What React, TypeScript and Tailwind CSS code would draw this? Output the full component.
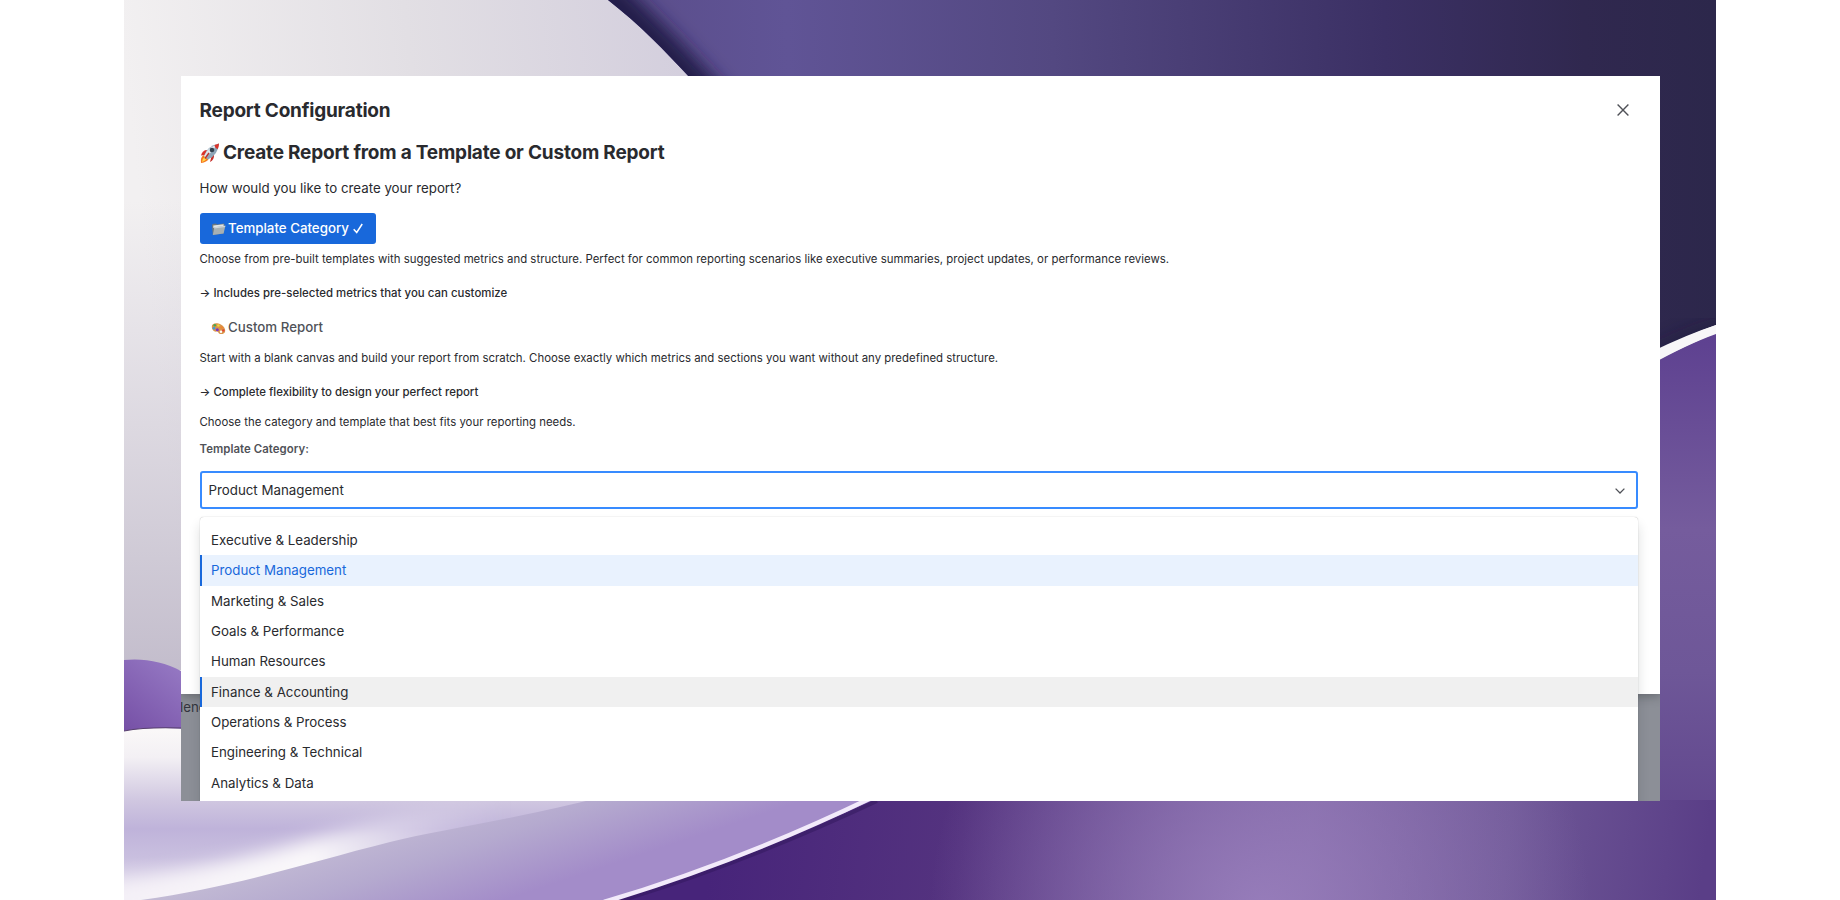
import React from "react";

const categories = [
  "Executive & Leadership",
  "Product Management",
  "Marketing & Sales",
  "Goals & Performance",
  "Human Resources",
  "Finance & Accounting",
  "Operations & Process",
  "Engineering & Technical",
  "Analytics & Data",
];

function Wallpaper() {
  return (
    <svg className="absolute inset-0 h-full w-full" viewBox="124 0 1592 900" preserveAspectRatio="none">
      <defs>
        <linearGradient id="pale" gradientUnits="userSpaceOnUse" x1="124" y1="60" x2="690" y2="0">
          <stop offset="0" stopColor="#f2f0f1" />
          <stop offset="0.5" stopColor="#e2dfe4" />
          <stop offset="1" stopColor="#d3cedd" />
        </linearGradient>
        <linearGradient id="paleDown" x1="0" y1="0" x2="0" y2="1">
          <stop offset="0.3" stopColor="#c8c2d2" stopOpacity="0" />
          <stop offset="1" stopColor="#c3bdcc" stopOpacity="1" />
        </linearGradient>
        <linearGradient id="night" gradientUnits="userSpaceOnUse" x1="610" y1="20" x2="1716" y2="0">
          <stop offset="0" stopColor="#5a4d8a" />
          <stop offset="0.16" stopColor="#605496" />
          <stop offset="0.4" stopColor="#534881" />
          <stop offset="0.7" stopColor="#3b3064" />
          <stop offset="0.88" stopColor="#30284f" />
          <stop offset="1" stopColor="#2c274b" />
        </linearGradient>
        <linearGradient id="violet" gradientUnits="userSpaceOnUse" x1="0" y1="330" x2="0" y2="900">
          <stop offset="0" stopColor="#5d4090" />
          <stop offset="0.35" stopColor="#755c9d" />
          <stop offset="0.6" stopColor="#6e5798" />
          <stop offset="1" stopColor="#5a3e87" />
        </linearGradient>
        <linearGradient id="deep" gradientUnits="userSpaceOnUse" x1="720" y1="780" x2="1700" y2="900">
          <stop offset="0" stopColor="#47247a" />
          <stop offset="0.25" stopColor="#54337f" />
          <stop offset="0.6" stopColor="#7b62a1" />
          <stop offset="0.8" stopColor="#6f5897" />
          <stop offset="1" stopColor="#5a3e87" />
        </linearGradient>
        <radialGradient id="glow" gradientUnits="userSpaceOnUse" cx="1260" cy="910" r="330">
          <stop offset="0" stopColor="#9a80bd" stopOpacity="0.9" />
          <stop offset="1" stopColor="#9a80bd" stopOpacity="0" />
        </radialGradient>
        <linearGradient id="bulb" gradientUnits="userSpaceOnUse" x1="124" y1="730" x2="181" y2="660">
          <stop offset="0" stopColor="#7650a6" />
          <stop offset="1" stopColor="#977bc5" />
        </linearGradient>
        <linearGradient id="mist" gradientUnits="userSpaceOnUse" x1="124" y1="730" x2="124" y2="900">
          <stop offset="0" stopColor="#faf8f8" />
          <stop offset="0.16" stopColor="#f3f0f4" />
          <stop offset="0.42" stopColor="#cfc6e0" />
          <stop offset="0.58" stopColor="#bfb3da" />
          <stop offset="0.75" stopColor="#c9bfdf" />
          <stop offset="1" stopColor="#f0ecf4" />
        </linearGradient>
        <linearGradient id="lilac" gradientUnits="userSpaceOnUse" x1="420" y1="795" x2="460" y2="915">
          <stop offset="0" stopColor="#c6bfd6" />
          <stop offset="0.5" stopColor="#b5aacf" />
          <stop offset="1" stopColor="#a38cc9" />
        </linearGradient>
        <linearGradient id="streak" gradientUnits="userSpaceOnUse" x1="124" y1="0" x2="500" y2="0">
          <stop offset="0" stopColor="#f4f0f7" />
          <stop offset="0.5" stopColor="#faf8fa" />
          <stop offset="1" stopColor="#e0d9ec" stopOpacity="0" />
        </linearGradient>
        <filter id="soft" x="-20%" y="-20%" width="140%" height="140%">
          <feGaussianBlur stdDeviation="9" />
        </filter>
        <clipPath id="nightArea">
          <path d="M608 0 C640 25 664 50 691 79 L900 420 L1500 420 L1659 350 Q1688 335 1716 325 V0Z" />
        </clipPath>
        <clipPath id="mistArea">
          <path d="M124 731 C145 727 170 727 220 732 V700 H760 V900 H124Z" />
        </clipPath>
      </defs>
      <rect x="124" width="600" height="900" fill="url(#pale)" />
      <rect x="124" width="600" height="670" fill="url(#paleDown)" />
      <g clipPath="url(#nightArea)">
        <rect x="600" width="1116" height="450" fill="url(#night)" />
        <path d="M590 -20 C632 20 664 50 730 124" fill="none" stroke="#241c49" strokeWidth="38" filter="url(#soft)" />
        <path d="M1640 362 Q1688 336 1730 326" fill="none" stroke="#1d193b" strokeWidth="12" opacity=".6" filter="url(#soft)" />
      </g>
      <path d="M1650 364 Q1688 344 1716 333 V900 H1640Z" fill="url(#violet)" />
      <path d="M1650 352.500 Q1688 334 1716 325 V334 Q1688 344 1650 365Z" fill="#f7f6f8" />
      <path d="M124 660 C145 658 164 662 181 671 H220 V735 H124Z" fill="url(#bulb)" />
      <g clipPath="url(#mistArea)">
        <rect x="124" y="700" width="640" height="200" fill="url(#mist)" />
        <path d="M90 908 C240 888 300 862 400 838 C450 826 500 818 560 806" fill="none" stroke="url(#streak)" strokeWidth="42" filter="url(#soft)" />
      </g>
      <path d="M124 731 C145 727 170 727 200 729" fill="none" stroke="#57406e" strokeWidth="1.200" />
      <path d="M141 900 C240 886 310 862 390 842 C440 830 500 822 590 800 H880 V900Z" fill="url(#lilac)" />
      <path d="M610 900 C700 872 790 838 873 800 H1716 V900Z" fill="url(#deep)" />
      <path d="M610 900 C700 872 790 838 873 800 H1716 V900Z" fill="url(#glow)" />
      <path d="M610 904 C706 875 796 839 877 801" fill="none" stroke="#2f1658" strokeWidth="4" opacity=".45" />
      <path d="M604 902 C702 873 790 837 871 798" fill="none" stroke="#f2eafa" strokeWidth="4.500" />
    </svg>
  );
}

function Rocket() {
  return (
    <svg className="relative -top-px h-[22px] w-[20px] shrink-0" viewBox="0 0 20 22">
      <path d="M7 8 Q2.500 8 1 13.500 L6 13Z" fill="#d9342b" />
      <path d="M11.500 14.500 L10 20 Q14.500 18 14 12Z" fill="#c52d28" />
      <path d="M4 13 Q0 15 1 21 Q7 20 8.500 17Z" fill="#f5781f" />
      <path d="M4.500 15 Q2 17 2 20 Q5 19 6.500 17Z" fill="#ffd84a" />
      <path d="M4 14 Q7 4 19 1.500 Q18 13 8 17.500Z" fill="#8ea6b8" />
      <path d="M4 14 Q8 5 18 2 L6 16Z" fill="#dde6ec" />
      <path d="M14.500 3 Q17 2 19 1.500 Q19 4.500 17.800 7 Q15 6.500 14.500 3Z" fill="#d9342b" />
      <circle cx="12" cy="8" r="2.300" fill="#33424f" />
      <path d="M9 11 L5 16.500" stroke="#b8342e" strokeWidth="1.500" />
    </svg>
  );
}

function Folder() {
  return (
    <svg className="h-[14px] w-[15px] shrink-0" viewBox="0 0 15 14">
      <path d="M1 3.500 L1.500 2 L5 1.500 L6 2.500 L13 1.500 L13.600 3 L12.600 11.500 L1.800 13Z" fill="#6d777d" />
      <path d="M2.200 3.600 L12.600 2.300 L12.600 5 L2.400 6Z" fill="#dfe4e6" />
      <path d="M3.400 5.200 L14.400 3.800 L12.600 11.500 L1.800 13Z" fill="#a7b0b4" />
      <path d="M3.400 5.200 L14.400 3.800 L14.100 5 L3.100 6.400Z" fill="#cfd5d8" />
    </svg>
  );
}

function Palette() {
  return (
    <svg className="h-[13px] w-[15px] shrink-0" viewBox="0 0 15 13">
      <path
        d="M.8 5 C.6 1.600 4 .6 7.500 1.500 C11.500 2.600 14.500 6 14.200 9 C14 11.800 11 12.600 8.500 11.800 C7.200 11.300 7.800 10 6.600 9.700 C5.400 9.400 4.500 10 3.200 9.200 C1.800 8.300 .9 6.800 .8 5Z"
        fill="#d9954b"
      />
      <circle cx="3.800" cy="3.300" r="1.300" fill="#4aa94f" />
      <circle cx="7.400" cy="3.500" r="1.300" fill="#f3d13c" />
      <circle cx="3" cy="6.300" r="1.300" fill="#3c9bdd" />
      <circle cx="10.600" cy="5.500" r="1.200" fill="#ef8430" />
      <circle cx="12.300" cy="8.400" r="1.200" fill="#e24236" />
      <circle cx="6.300" cy="7.700" r="1.500" fill="#7a35c4" />
      <circle cx="10" cy="9.800" r="1.200" fill="#fff" />
    </svg>
  );
}

export default function App() {
  return (
    <main className="flex h-[900px] w-[1840px] justify-center overflow-hidden bg-white font-['Inter',sans-serif] text-[#292a2e]">
      <div className="relative flex h-full w-[1592px] pl-[57px] pt-[76px]">
        <Wallpaper />
        <div className="relative h-[725px] w-[1478.500px] overflow-hidden bg-[#8c8f97]">
          <section className="relative z-10 flex h-[617.500px] flex-col bg-white px-[18.500px] shadow-[0_2px_10px_rgba(30,31,33,.35)]">
            <header className="flex h-[67.500px] items-center justify-between pr-[12.500px] pt-[2px]">
              <h1 className="text-[19px] font-[650] tracking-[-0.21px]">Report Configuration</h1>
              <svg className="mb-px h-[12px] w-[12px]" viewBox="0 0 12 12" fill="none" stroke="#505258" strokeWidth="1.400">
                <path d="M.6.6 11.400 11.400M11.400.6.6 11.400" />
              </svg>
            </header>
            <h2 className="flex h-[18px] items-center gap-[3.500px] pt-[2px] text-[19px] font-[650] tracking-[-0.2px]">
              <Rocket />
              Create Report from a Template or Custom Report
            </h2>
            <p className="mt-[16px] h-[21px] text-[13.300px] leading-[20px]">How would you like to create your report?</p>
            <button className="mt-[14px] flex h-[31px] w-[176px] items-center gap-[2.500px] rounded-[3px] bg-[#1868db] pl-[11px] pt-px text-[13.300px] font-medium text-white">
              <Folder />
              Template Category
              <svg className="mb-px ml-[2px] h-[11px] w-[10px]" viewBox="0 0 10 11" fill="none" stroke="white" strokeWidth="1.500">
                <path d="M.7 6.300 3.700 9.500 9.200 1" />
              </svg>
            </button>
            <p className="mt-[5px] h-[20px] text-[11.400px] leading-[20px] tracking-[0.012px]">
              Choose from pre-built templates with suggested metrics and structure. Perfect for common reporting scenarios like executive summaries, project updates, or performance reviews.
            </p>
            <p className="mt-[14px] h-[20px] text-[11.400px] font-medium leading-[20px] tracking-[0.035px]">→ Includes pre-selected metrics that you can customize</p>
            <div className="mt-[9px] flex h-[31px] items-center gap-[2.500px] pl-[11px] pt-[2px] text-[13.300px] font-medium text-[#505258]">
              <Palette />
              Custom Report
            </div>
            <p className="mt-[5px] h-[20px] text-[11.400px] leading-[20px] tracking-[0.012px]">
              Start with a blank canvas and build your report from scratch. Choose exactly which metrics and sections you want without any predefined structure.
            </p>
            <p className="mt-[14px] h-[20px] text-[11.400px] font-medium leading-[20px] tracking-[0.012px]">→ Complete flexibility to design your perfect report</p>
            <p className="mt-[10px] h-[20px] text-[11.400px] leading-[20px] tracking-[0.012px]">Choose the category and template that best fits your reporting needs.</p>
            <label className="mt-[7px] h-[20px] text-[11.400px] font-semibold leading-[20px] tracking-[0.05px] text-[#505258]">Template Category:</label>
            <div className="mt-[12.500px] flex h-[38px] w-[1438px] shrink-0 items-center justify-between rounded-[3px] border-2 border-[#388bff] pl-[7px] pr-[11px] pt-[2px] text-[13.300px]">
              Product Management
              <svg className="h-[6px] w-[10px]" viewBox="0 0 10 6" fill="none" stroke="#505258" strokeWidth="1.300">
                <path d="M.6.6 5 5 9.400.6" />
              </svg>
            </div>
          </section>
          <p className="-ml-px h-[28px] text-[13.300px] leading-[27px] text-[#33353d]">lend</p>
          <ul className="absolute left-[18.500px] top-[440.500px] z-20 h-[300px] w-[1438px] rounded-t-[4px] bg-white pt-[8.500px] text-[13.300px] shadow-[0_0_1px_rgba(30,31,33,.4),0_8px_12px_rgba(30,31,33,.15)]">
            {categories.map((name, i) => (
              <li
                key={name}
                className={
                  "flex h-[30.400px] items-center border-l-2 pl-[9.500px] pt-px " +
                  (i === 1
                    ? "border-[#1868db] bg-[#e9f2fe] text-[#1868db]"
                    : i === 5
                      ? "border-[#1868db] bg-[#f0f0f0]"
                      : "border-transparent")
                }
              >
                {name}
              </li>
            ))}
          </ul>
        </div>
      </div>
    </main>
  );
}
